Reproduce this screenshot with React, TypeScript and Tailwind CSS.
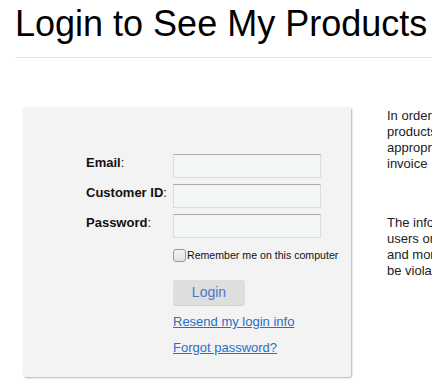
const fields = ["Email", "Customer ID", "Password"];

const App: React.FC = () => {
  return (
    <div className="w-[432px] h-[381px] overflow-hidden bg-white font-['Liberation_Sans',Arial,sans-serif]">
      <div className="w-[640px] pl-[15px]">
        <h1 className="mt-1 text-[36px] leading-[40px] text-black font-normal">
          Login to See My Products
        </h1>
        <div className="mt-[13px] h-px bg-[#e5e5e5]"></div>

        <div className="flex items-start mt-[49px] ml-2">
          <div className="w-[328px] h-[270px] shrink-0 bg-[#f3f3f3] rounded-[3px] shadow-[1px_1px_2px_rgba(0,0,0,0.3)] pt-[47px] pl-[63px]">
            <div className="flex flex-col gap-[6px]">
              {fields.map((f) => (
                <div key={f} className="flex items-start">
                  <label className="w-[87px] pt-[1px] text-[13px] leading-[15px] text-[#111]">
                    <span className="font-bold">{f}</span>:
                  </label>
                  <input
                    type={f === "Password" ? "password" : "text"}
                    className="w-[148px] h-[24px] bg-[#f3f6f7] border border-[#dcdcdc] border-t-[#aaaaaa] outline-none"
                  />
                </div>
              ))}
            </div>

            <div className="ml-[87px] mt-[11px] flex items-center">
              <span className="w-[13px] h-[13px] rounded-[3px] border border-[#999] bg-gradient-to-b from-[#f4f4f4] to-[#e2e2e2]"></span>
              <span className="ml-px text-[10.6px] leading-[13px] text-[#111]">
                Remember me on this computer
              </span>
            </div>

            <button className="ml-[87px] mt-[18px] w-[72px] h-[25px] bg-[#dedede] rounded-[3px] shadow-[0_1px_0_rgba(0,0,0,0.15)] text-[14px] text-[#4a78c6] flex items-center justify-center">
              Login
            </button>

            <div className="ml-[87px] mt-[9px] flex flex-col gap-[11px] text-[13px] leading-[15px]">
              <a href="#" className="text-[#2a6ec8] underline">
                Resend my login info
              </a>
              <a href="#" className="text-[#2a6ec8] underline">
                Forgot password?
              </a>
            </div>
          </div>

          <div className="ml-[36px] pt-px text-[13px] leading-[16px] text-[#222]">
            <p className="whitespace-nowrap">
              In order to see My Products, please log in.
              <br />
              products purchased under your account are
              <br />
              appropriately listed here along with the
              <br />
              invoice{"\u00a0\u00a0\u00a0"}and order details.
            </p>
            <p className="mt-[43px] whitespace-nowrap">
              The information on this site is for authorized
              <br />
              users only. Sharing of login information
              <br />
              and more than one user per account may
              <br />
              be violation of our terms.
            </p>
          </div>
        </div>
      </div>
    </div>
  );
};

export default App;
